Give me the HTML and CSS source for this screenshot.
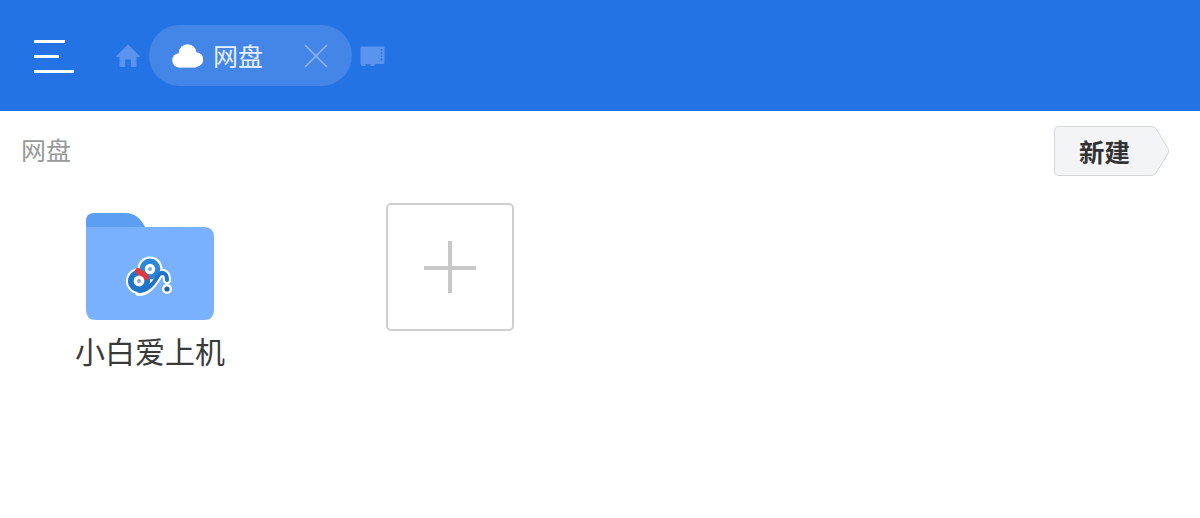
FILE: index.html
```html
<!DOCTYPE html>
<html lang="zh-CN">
<head>
  <meta charset="UTF-8">
  <link rel="stylesheet" href="styles.css">
</head>
<body>
  <header class="topbar">
    <div class="menu-btn">
      <span class="menu-line line-a"></span>
      <span class="menu-line line-b"></span>
      <span class="menu-line line-c"></span>
    </div>
    <svg class="home-icon" viewBox="0 0 24 24" width="24" height="24">
      <path d="M12 .5 L24 12.2 Q24 13 23 13 L20.5 13 L20.5 23 L14.8 23 L14.8 15.5 L9.2 15.5 L9.2 23 L3.5 23 L3.5 13 L1 13 Q0 13 0 12.2 Z" fill="#5a94ef"/>
    </svg>
    <div class="tab-pill">
      <svg class="cloud-icon" viewBox="0 0 31 24" width="31" height="24">
        <circle cx="7.4" cy="16.4" r="7.2" fill="#ffffff"/>
        <circle cx="15.6" cy="9" r="8.8" fill="#ffffff"/>
        <circle cx="23.8" cy="15.6" r="7.4" fill="#ffffff"/>
        <rect x="7" y="14" width="17" height="9.6" fill="#ffffff"/>
      </svg>
      <span class="tab-label">网盘</span>
      <svg class="close-icon" viewBox="0 0 24 24" width="24" height="24">
        <path d="M1 1 L23 23 M23 1 L1 23" stroke="#8fb6f3" stroke-width="1.6" fill="none"/>
      </svg>
    </div>
    <svg class="card-icon" viewBox="0 0 25 21" width="25" height="21">
      <path d="M1.5 .5 L23.5 .5 Q24.5 .5 24.5 1.5 L24.5 17 Q24.5 18 23.5 18 L15 18 L14 20 L11 20 L10 18 L6 18 L5 20 L2 20 L.5 18 L.5 1.5 Q.5 .5 1.5 .5 Z" fill="#5a94ef"/>
      <path d="M21.5 3 V16" stroke="#2473e4" stroke-width="1.4" stroke-dasharray="1.6 1.6" fill="none"/>
    </svg>
  </header>

  <div class="path-bar">
    <span class="path-text">网盘</span>
    <div class="new-btn">
      <svg class="new-btn-bg" viewBox="0 0 116 50" width="116" height="50">
        <path d="M5 .5 L97 .5 Q100 .5 102 2.5 L114 22.5 Q115.5 25 114 27.5 L102 47 Q100 49.5 97 49.5 L5 49.5 Q.5 49.5 .5 45 L.5 5 Q.5 .5 5 .5 Z" fill="#f3f4f6" stroke="#d4d5d8" stroke-width="1"/>
      </svg>
      <span class="new-btn-text">新建</span>
    </div>
  </div>

  <main class="file-grid">
    <div class="file-cell">
      <svg class="folder-icon" viewBox="0 0 128 107" width="128" height="107">
        <path d="M8 0 L40 0 Q52 0 59 14 L59 20 L0 20 L0 8 Q0 0 8 0 Z" fill="#5c9ef2"/>
        <path d="M0 14 L118 14 Q128 14 128 24 L128 97 Q128 107 118 107 L10 107 Q0 107 0 97 Z" fill="#7ab1ff"/>
        <g fill="#ffffff">
          <circle cx="53" cy="68" r="13"/>
          <circle cx="64" cy="56" r="12.5"/>
          <circle cx="81" cy="76" r="5"/>
        </g>
        <path d="M53 79 C62 79 68 70 72 63 C75 58 81 59 81 67" fill="none" stroke="#ffffff" stroke-width="8" stroke-linecap="round"/>
        <circle cx="53" cy="68" r="11" fill="#1f74c9"/>
        <circle cx="64" cy="56" r="10.4" fill="#2a86d8"/>
        <path d="M53 78 C62 78 68 70 72 63 C75 58 81 59 81 67" fill="none" stroke="#1f74c9" stroke-width="4" stroke-linecap="round"/>
        <path d="M52 58 L60 64" stroke="#dc3a3f" stroke-width="6" stroke-linecap="round"/>
        <circle cx="53" cy="68" r="5.4" fill="#ffffff"/>
        <circle cx="53" cy="68" r="2" fill="#7ea8dc"/>
        <circle cx="64" cy="56" r="5.2" fill="#ffffff"/>
        <circle cx="64" cy="56" r="2" fill="#7ea8dc"/>
        <circle cx="81" cy="76" r="2.6" fill="#1d5fa8"/>
      </svg>
      <div class="file-name">小白爱上机</div>
    </div>
    <div class="file-cell">
      <div class="add-box">
        <span class="plus-h"></span>
        <span class="plus-v"></span>
      </div>
    </div>
  </main>
</body>
</html>
```
FILE: styles.css
```css
body {
  margin: 0;
  background-color: #ffffff;
  font-family: "Noto Sans CJK SC", "Noto Sans", sans-serif;
  color: #333333;
}

.topbar {
  display: flex;
  align-items: center;
  height: 111px;
  padding-left: 34px;
  box-sizing: border-box;
  background-color: #2473e4;
}

.menu-btn {
  display: flex;
  flex-direction: column;
  gap: 12px;
  width: 40px;
  margin-top: 1px;
  margin-right: 42px;
}

.menu-line {
  display: block;
  height: 3px;
  background-color: #ffffff;
}

.line-a {
  width: 31px;
}

.line-b {
  width: 25px;
}

.line-c {
  width: 40px;
}

.home-icon {
  margin-right: 9px;
}

.tab-pill {
  display: flex;
  align-items: center;
  width: 203px;
  height: 61px;
  padding-left: 23px;
  box-sizing: border-box;
  border-radius: 31px;
  background-color: #4485e8;
}

.cloud-icon {
  margin-right: 10px;
}

.tab-label {
  font-size: 25px;
  line-height: 1;
  color: #e6f0fe;
}

.close-icon {
  margin-left: 41px;
}

.card-icon {
  margin-left: 8px;
  margin-top: 2px;
}

.path-bar {
  display: flex;
  align-items: flex-start;
  justify-content: space-between;
  height: 50px;
  margin-top: 15px;
  padding: 0 30px 0 21px;
}

.path-text {
  font-size: 25px;
  line-height: 47px;
  color: #999999;
}

.new-btn {
  position: relative;
  width: 116px;
  height: 50px;
  display: flex;
  align-items: center;
  padding-left: 25px;
  box-sizing: border-box;
}

.new-btn-bg {
  position: absolute;
  top: 0;
  left: 0;
}

.new-btn-text {
  position: relative;
  font-size: 25.5px;
  line-height: 50px;
  font-weight: 700;
  color: #333333;
}

.file-grid {
  display: flex;
  margin-top: 27px;
}

.file-cell {
  display: flex;
  flex-direction: column;
  align-items: center;
  width: 300px;
}

.folder-icon {
  display: block;
  margin-top: 10px;
}

.file-name {
  margin-top: 8px;
  font-size: 30px;
  line-height: 44px;
  color: #3a3a3a;
}

.add-box {
  position: relative;
  width: 128px;
  height: 128px;
  box-sizing: border-box;
  border: 2px solid #cfcfcf;
  border-radius: 5px;
}

.plus-h {
  position: absolute;
  top: 61px;
  left: 36px;
  width: 52px;
  height: 4px;
  background-color: #c8c8c8;
}

.plus-v {
  position: absolute;
  top: 36px;
  left: 60px;
  width: 4px;
  height: 52px;
  background-color: #c8c8c8;
}
```
